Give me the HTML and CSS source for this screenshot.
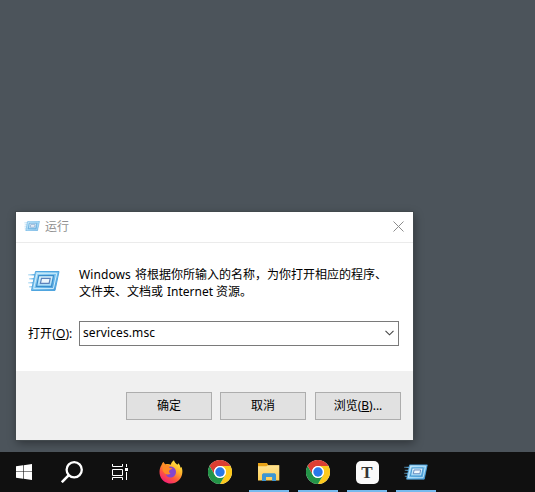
FILE: index.html
```
<!DOCTYPE html>
<html lang="zh-CN">
<head>
<meta charset="utf-8">
<title>运行</title>
<link rel="stylesheet" href="styles.css">
</head>
<body>
<svg class="defs" width="0" height="0" aria-hidden="true">
  <defs>
    <linearGradient id="runBlue" x1="0" y1="0" x2="1" y2="1"><stop offset="0" stop-color="#a8daf5"/><stop offset=".55" stop-color="#70bdec"/><stop offset="1" stop-color="#3e93d4"/></linearGradient>
    <linearGradient id="runPale" x1="0" y1="0" x2="0" y2="1"><stop offset="0" stop-color="#e4f5fc"/><stop offset="1" stop-color="#9fd8f7"/></linearGradient>
    <linearGradient id="trail" gradientUnits="userSpaceOnUse" x1="-2" y1="0" x2="7" y2="0"><stop offset="0" stop-color="#8ccdf2" stop-opacity=".15"/><stop offset="1" stop-color="#4ca4de"/></linearGradient>
    <linearGradient id="fox" x1=".85" y1=".05" x2=".25" y2="1"><stop offset="0" stop-color="#fff04a"/><stop offset=".35" stop-color="#ffb22b"/><stop offset=".65" stop-color="#ff5a3c"/><stop offset="1" stop-color="#f3187b"/></linearGradient>
    <linearGradient id="folder" x1="0" y1="0" x2="0" y2="1"><stop offset="0" stop-color="#ffe391"/><stop offset="1" stop-color="#ffcf55"/></linearGradient>
    <symbol id="run" viewBox="0 0 32 24">
      <path d="M0 5h7v1.6H0zM1 9h6v1.6H1zM0 13h5.500v1.600H0zM1 17h4v1.600H1z" fill="url(#trail)"/>
      <path d="M7.500 2.500H31L27 21.500H3.500z" fill="url(#runBlue)" stroke="#4fa5df" stroke-linejoin="round"/>
      <path d="M9 4.300h19.700l-3.300 15.300H5.700z" fill="none" stroke="#d3effc"/>
      <path d="M10.800 6.700h14.700L23.400 17.300H8.600z" fill="url(#runPale)" stroke="#3b8ecc" stroke-width="1.200"/>
      <path d="M13.500 9.300h8.700l-1.100 5h-8.700z" fill="#edf6fc" stroke="#5c82bb" stroke-width="1.200"/>
    </symbol>
    <symbol id="chrome" viewBox="0 0 24 24">
      <circle cx="12" cy="12" r="12" fill="#fff"/>
      <path d="M1.6 6A12 12 0 0 1 22.4 6H12a6 6 0 0 0-5.2 9z" fill="#dc3e32"/>
      <path d="M22.4 6A12 12 0 0 1 12 24l5.2-9A6 6 0 0 0 12 6z" fill="#fdc91c"/>
      <path d="M12 24A12 12 0 0 1 1.6 6l5.2 9a6 6 0 0 0 10.4 0z" fill="#239447"/>
      <circle cx="12" cy="12" r="6" fill="#fff"/><circle cx="12" cy="12" r="4.7" fill="#2878e8"/>
    </symbol>
  </defs>
</svg>
<main class="desktop">
  <section class="dialog">
    <header class="titlebar">
      <svg class="title-icon" width="16" height="12"><use href="#run"/></svg>
      <span class="title">运行</span>
      <svg class="close" width="11" height="11" viewBox="0 0 11 11"><path d="M.5.5l10 10M10.5.5l-10 10"/></svg>
    </header>
    <div class="content">
      <div class="message">
        <svg class="run-icon" width="32" height="24"><use href="#run"/></svg>
        <p class="description"><span class="word-windows">Windows</span>将根据你所输入的名称，为你打开相应的程序、<br>文件夹、文档或<span class="word-internet">Internet</span>资源。</p>
      </div>
      <div class="open-row">
        <label class="open-label">打开(<u>O</u>):</label>
        <div class="combo"><span class="value">services.msc</span><svg width="9" height="6" viewBox="0 0 9 6"><path d="M.5.8l4 4 4-4"/></svg></div>
      </div>
    </div>
    <footer class="actions">
      <button class="button">确定</button>
      <button class="button">取消</button>
      <button class="button browse">浏览(<u>B</u>)...</button>
    </footer>
  </section>
  <nav class="taskbar">
    <div class="system">
      <div class="slot"><svg width="16" height="16" viewBox="0 0 16 16"><path fill="#fff" d="M0 2.2l7-.9V7.500H0zM7.600 1.200L16 0v7.500H7.600zM0 8.100h7v6.600L0 13.800zM7.600 8.100H16V16l-8.400-1.200z"/></svg></div>
      <div class="slot"><svg width="22" height="22" viewBox="0 0 22 22"><circle cx="13.2" cy="8.8" r="7.6" fill="none" stroke="#fff" stroke-width="2.300"/><path d="M7.8 14.2L.8 21.2" stroke="#fff" stroke-width="2.600"/></svg></div>
      <div class="slot"><svg width="16" height="16" viewBox="0 0 16 16" fill="none" stroke="#fff"><path d="M.5 0v2.500h10V0M.5 5.500h10v6H.5zM.5 16v-2.500h10V16M14.500 0v3M14.500 8v8"/><path d="M13 4h3v3h-3z" fill="#fff" stroke="none"/></svg></div>
    </div>
    <div class="apps">
      <div class="app"><svg width="24" height="24" viewBox="0 0 24 24">
        <path d="M2.600 5.100L4.200 2l2 2.500c2-.8 3.900-.6 5.500.2C12.300 2.500 13.600 1 15 .2c.3 2 1.800 3 3.400 4.600l1-1.500c1.200 1.300 1.800 2.800 2.100 4.400l1-.7C23.300 9.200 23.600 11 23.300 13 22.600 19 17.800 23.500 12 23.500S1.200 19.200.6 13.400c-.3-3 .3-6 2-8.300z" fill="url(#fox)"/>
        <path d="M8.200 7.300c3-1.800 7.700-.5 8.600 3.100 1 4.300-2.300 7.400-5.700 7.100-3-.2-4.700-2.700-4.200-5.300z" fill="#8545cf"/>
        <path d="M2.600 5.100L4.200 2l2 2.700c2-.4 3.700.3 4.600 1.500-.7.4-.6 1-.2 1.700l2.800.4c-.4 1.400-3.200 1.300-3.200 2.700-.6 1.200.3 2 1.300 2.600-1.500 1.400-4.200 1.200-5.600-.2-1.400-1.300-3.300-3.200-2-6.700z" fill="#ff8b26"/>
      </svg></div>
      <div class="app"><svg width="24" height="24"><use href="#chrome"/></svg></div>
      <div class="app active"><svg width="22" height="18" viewBox="0 0 22 18">
        <path d="M0 0h9l1.300 2.200H21V6H0z" fill="#e8a317"/><path d="M0 3.200h8.500l1.400-1H21.300V17.500H0z" fill="url(#folder)"/>
        <path d="M4 18v-6.500l1.200-1.300h11.600l1.200 1.300V18h-3.900v-4H8v4z" fill="#3d96d2"/>
      </svg></div>
      <div class="app active"><svg width="24" height="24"><use href="#chrome"/></svg></div>
      <div class="app active"><span class="typora">T</span></div>
      <div class="app active"><svg width="24" height="18"><use href="#run"/></svg></div>
    </div>
  </nav>
</main>
</body>
</html>
```

FILE: styles.css
```
* { box-sizing: border-box; }
body { margin: 0; font: 12px/17px "Noto Sans", "Noto Sans CJK SC", sans-serif; color: #000; }
.defs { position: absolute; }
svg { display: block; flex-shrink: 0; }
.desktop { width: 535px; height: 492px; background: #4c545b; display: flex; flex-direction: column; justify-content: space-between; padding-top: 212px; overflow: hidden; }
.dialog { width: 397px; height: 228px; margin-left: 16px; background: #fff; box-shadow: 0 0 0 1px #42494d, 1px 3px 9px rgba(0,0,0,.4); display: flex; flex-direction: column; }
.titlebar { height: 31px; border-bottom: 1px solid #ebebeb; display: flex; align-items: center; padding: 0 9px 2px 8px; color: #919191; }
.title-icon { opacity: .85; }
.title { margin-left: 5px; }
.close { margin-left: auto; fill: none; stroke: #8c8c8c; }
.content { height: 128px; padding: 22px 14px 0 12px; }
.message { display: flex; align-items: flex-start; height: 36px; }
.run-icon { margin-top: 4px; }
.description { margin: 0 0 0 19px; white-space: nowrap; font-family: "Noto Sans CJK SC", sans-serif; }
.description span { display: inline-block; font-family: "Noto Sans", sans-serif; line-height: 12px; }
.word-windows { width: 56px; letter-spacing: .1px; }
.word-internet { width: 53px; padding-left: 4px; }
.open-row { display: flex; align-items: center; margin-top: 20px; }
.open-label { width: 51px; white-space: nowrap; letter-spacing: .1px; }
.combo { flex: 1; height: 25px; border: 1px solid #7a7a7a; display: flex; align-items: center; justify-content: space-between; padding: 0 4px 1px 3px; }
.combo svg { fill: none; stroke: #444; stroke-width: 1.1; }
.value { letter-spacing: .1px; margin-top: -2px; }
.actions { flex: 1; background: #f0f0f0; display: flex; justify-content: flex-end; gap: 8px; padding: 21px 12px 0 0; }
.button { width: 86px; height: 28px; border: 1px solid #adadad; background: #e1e1e1; font: inherit; padding: 0 0 1px; color: #000; }
.browse { margin-left: 1px; }
u { text-underline-offset: 1px; text-decoration-thickness: 1px; }
.taskbar { height: 40px; background: #101010; display: flex; }
.system { display: flex; margin-right: 7px; }
.slot { width: 48px; display: flex; align-items: center; justify-content: center; }
.apps { display: flex; gap: 9px; }
.app { width: 40px; display: flex; align-items: center; justify-content: center; border-top: 2px solid transparent; border-bottom: 2px solid transparent; }
.active { border-bottom-color: #76b9ed; }
.typora { width: 23px; height: 23px; border-radius: 5px; background: #fafafa; color: #333; font: bold 17px/23px "Liberation Serif", serif; text-align: center; }
```
